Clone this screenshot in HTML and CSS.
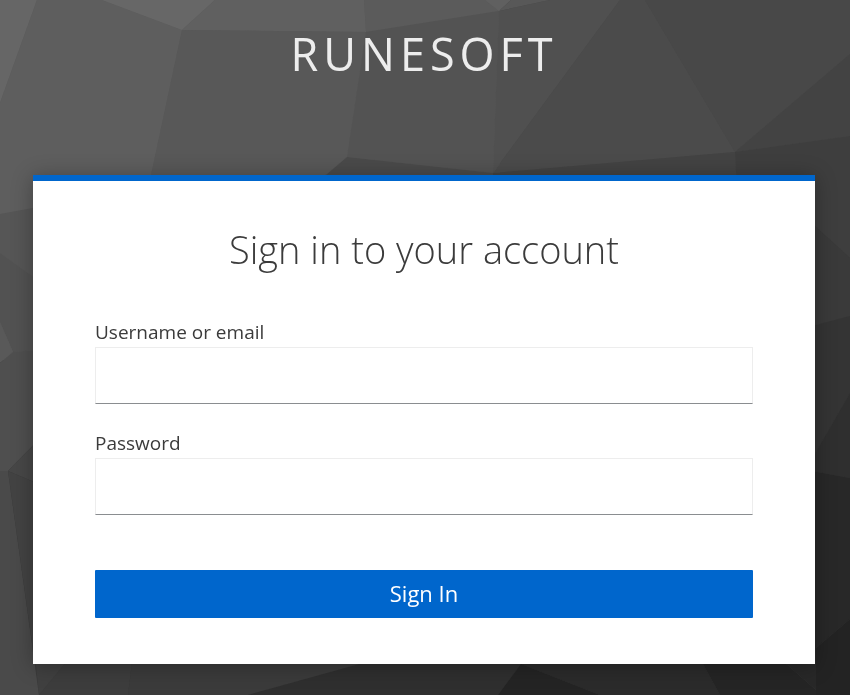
FILE: index.html
```html
<!DOCTYPE html>
<html lang="en">
<head>
  <meta charset="utf-8">
  <meta name="viewport" content="width=device-width, initial-scale=1">
  <title>Sign in to Runesoft</title>
  <link rel="stylesheet" href="styles.css">
</head>
<body>
  <svg class="login-bg" viewBox="0 0 850 695" preserveAspectRatio="xMidYMid slice" aria-hidden="true">
    <!-- base tones under the facets -->
    <rect fill="#5a5a5a" width="500" height="360" />
    <rect fill="#484848" x="500" width="350" height="180" />
    <!-- top -->
    <polygon fill="#666666" points="0,0 37,0 0,103" />
    <polygon fill="#5e5e5e" points="37,0 102,0 182,30 150,180 60,300 0,214 0,103" />
    <polygon fill="#676767" points="102,0 215,0 182,30" />
    <polygon fill="#606060" points="215,0 364,0 366,32 182,30" />
    <polygon fill="#585858" points="182,30 366,32 347,157 320,180 150,180" />
    <polygon fill="#5b5b5b" points="364,0 485,0 499,11 366,32" />
    <polygon fill="#606060" points="485,0 511,0 499,11" />
    <polygon fill="#585858" points="511,0 550,0 499,11" />
    <polygon fill="#535353" points="366,32 499,11 493,173 347,157" />
    <polygon fill="#505050" points="499,11 550,0 620,0 493,173" />
    <polygon fill="#4b4b4b" points="620,0 645,0 735,152 493,173" />
    <polygon fill="#484848" points="645,0 850,0 850,54 735,152" />
    <polygon fill="#434343" points="850,54 850,136 735,152" />
    <polygon fill="#4a4a4a" points="347,157 493,173 493,190 320,180" />
    <polygon fill="#434343" points="493,173 735,152 737,190 493,190" />
    <!-- right -->
    <polygon fill="#3e3e3e" points="735,152 850,136 850,258 816,227 737,190" />
    <polygon fill="#3a3a3a" points="790,204 816,227 850,258 850,316 790,332" />
    <polygon fill="#343434" points="790,332 850,316 850,393 790,497" />
    <polygon fill="#2f2f2f" points="850,393 850,478 790,467 790,497" />
    <polygon fill="#282828" points="790,467 850,478 850,619 816,648 790,660" />
    <!-- left -->
    <polygon fill="#565656" points="0,214 60,203 60,296 0,253" />
    <polygon fill="#525252" points="0,253 60,296 60,348 13,352 0,322" />
    <polygon fill="#595959" points="0,322 13,352 0,363" />
    <polygon fill="#4f4f4f" points="0,363 13,352 60,348 60,418 8,471 0,471" />
    <polygon fill="#474747" points="8,471 60,418 60,493" />
    <polygon fill="#4a4a4a" points="0,471 8,471 39,695 0,695" />
    <polygon fill="#434343" points="8,471 60,493 60,670 35,664" />
    <!-- bottom -->
    <polygon fill="#404040" points="35,655 72,655 39,695" />
    <polygon fill="#3d3d3d" points="72,655 133,655 128,695 39,695" />
    <polygon fill="#3b3b3b" points="133,655 392,655 248,695 128,695" />
    <polygon fill="#2f2f2f" points="392,655 528,655 498,695 248,695" />
    <polygon fill="#2b2b2b" points="498,655 698,655 720,695 600,695" />
    <polygon fill="#242424" points="521,664 600,695 498,695" />
    <polygon fill="#252525" points="698,655 776,655 816,690 816,695 720,695" />
    <polygon fill="#282828" points="776,655 816,648 816,690" />
    <polygon fill="#232323" points="850,619 850,695 816,695 816,648" />
  </svg>

  <div class="login-page">
    <header class="login-header">RUNESOFT</header>
    <main class="card">
      <h1 class="card-title">Sign in to your account</h1>
      <form class="login-form" action="#" method="post">
        <div class="form-group">
          <label for="username">Username or email</label>
          <input id="username" name="username" type="text" autocomplete="off">
        </div>
        <div class="form-group">
          <label for="password">Password</label>
          <input id="password" name="password" type="password" autocomplete="off">
        </div>
        <button class="btn-primary" type="submit">Sign In</button>
      </form>
    </main>
  </div>
</body>
</html>
```
FILE: styles.css
```css
* {
  box-sizing: border-box;
}

body {
  margin: 0;
  min-height: 100vh;
  background: #3a3a3a;
  color: #3b3b3b;
  font-family: "Open Sans", "Noto Sans", sans-serif;
}

.login-bg {
  position: fixed;
  top: 0;
  left: 0;
  z-index: -1;
  width: 100%;
  height: 100%;
}

.login-page {
  padding: 0 35px 31px 33px;
}

.login-header {
  padding: 23px 0 90px;
  color: #ededed;
  font-size: 45px;
  line-height: 62px;
  letter-spacing: 5px;
  text-align: center;
}

.card {
  padding: 42px 62px 46px;
  background: #fff;
  border-top: 6px solid #06c;
  box-shadow: 0 2px 20px rgba(3, 3, 3, 0.3);
}

.card-title {
  margin: 0 0 44px;
  font-size: 38px;
  font-weight: 300;
  line-height: 52px;
  text-align: center;
}

.form-group {
  margin-bottom: 26px;
}

.form-group label {
  display: block;
  margin-bottom: 2px;
  font-size: 19px;
  line-height: 26px;
}

.form-group input {
  display: block;
  width: 100%;
  height: 57px;
  padding: 8px 12px;
  background: #fff;
  border: 1px solid #ededed;
  border-bottom-color: #8a8d90;
  color: inherit;
  font: inherit;
  font-size: 22px;
}

.btn-primary {
  display: block;
  width: 100%;
  margin-top: 55px;
  padding: 7px 8px 9px;
  background: #06c;
  border: 0;
  border-radius: 1px;
  color: #fff;
  font: inherit;
  font-size: 22px;
  line-height: 32px;
  cursor: pointer;
}
```
